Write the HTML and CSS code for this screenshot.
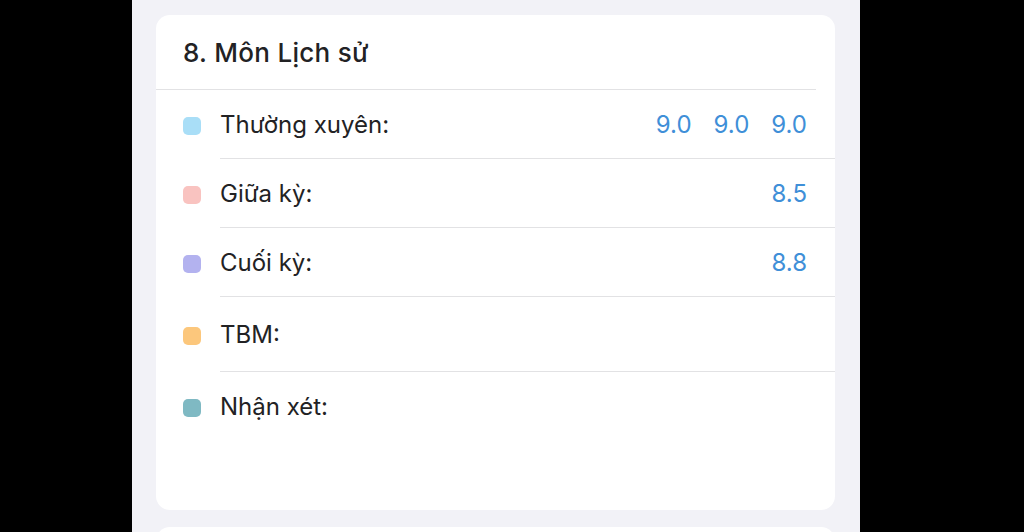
FILE: index.html
```html
<!DOCTYPE html>
<html lang="vi">

<head>
    <meta charset="UTF-8">
    <meta name="viewport" content="width=device-width, initial-scale=1.0">
    <title>Bảng điểm</title>
    <link rel="stylesheet" href="styles.css">
</head>

<body>
    <div class="screen">
        <div class="card">
            <div class="card-header">
                <h2>8. Môn Lịch sử</h2>
            </div>

            <div class="row">
                <span class="dot dot-tx"></span>
                <div class="row-body">
                    <span class="label">Thường xuyên:</span>
                    <span class="scores"><span>9.0</span><span>9.0</span><span>9.0</span></span>
                </div>
            </div>
            <div class="row">
                <span class="dot dot-gk"></span>
                <div class="row-body">
                    <span class="label">Giữa kỳ:</span>
                    <span class="scores"><span>8.5</span></span>
                </div>
            </div>
            <div class="row">
                <span class="dot dot-ck"></span>
                <div class="row-body">
                    <span class="label">Cuối kỳ:</span>
                    <span class="scores"><span>8.8</span></span>
                </div>
            </div>
            <div class="row row-tall">
                <span class="dot dot-tbm"></span>
                <div class="row-body">
                    <span class="label">TBM:</span>
                </div>
            </div>
            <div class="row last">
                <span class="dot dot-nx"></span>
                <div class="row-body">
                    <span class="label">Nhận xét:</span>
                </div>
            </div>
        </div>

        <div class="card next"></div>
    </div>
</body>

</html>
```

FILE: styles.css
```css
body {
    margin: 0;
    background-color: #000;
    font-family: "Inter", "Liberation Sans", sans-serif;
    color: #222224;
}

.screen {
    width: 728px;
    height: 532px;
    margin-left: 132px;
    padding-top: 15px;
    box-sizing: border-box;
    background-color: #f2f2f7;
    overflow: hidden;
}

.card {
    margin: 0 25px 0 24px;
    height: 495px;
    background-color: #fff;
    border-radius: 14px;
}

.card.next {
    margin-top: 17px;
    height: 60px;
}

.card-header {
    height: 74px;
    padding-left: 27px;
    margin-right: 19px;
    border-bottom: 1.5px solid #e2e2e4;
    display: flex;
    align-items: center;
}

.card-header h2 {
    margin: 0;
    font-size: 26px;
    font-weight: 500;
    letter-spacing: 0.3px;
}

.row {
    display: flex;
    align-items: center;
    height: 69px;
    padding-left: 27px;
}

.row-tall {
    height: 75px;
}

.dot {
    width: 18px;
    height: 18px;
    border-radius: 5px;
    margin-right: 19px;
    margin-top: 3px;
    flex-shrink: 0;
}

/* màu từng loại điểm */
.dot-tx {
    background-color: #a9def7;
}

.dot-gk {
    background-color: #f9c3c0;
}

.dot-ck {
    background-color: #b3b2ef;
}

.dot-tbm {
    background-color: #fcc77c;
}

.dot-nx {
    background-color: #7fb9c3;
}

.row-body {
    flex: 1;
    height: 100%;
    display: flex;
    align-items: center;
    justify-content: space-between;
    padding-right: 28px;
    border-bottom: 1.5px solid #e2e2e4;
    box-sizing: border-box;
}

.row.last .row-body {
    border-bottom: none;
}

.label {
    font-size: 24px;
}

.scores {
    display: flex;
    gap: 22px;
    font-size: 24px;
    color: #3f8fd8;
}
```
